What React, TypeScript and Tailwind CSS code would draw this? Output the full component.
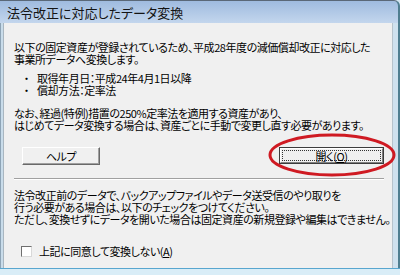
import React from "react";

export default function App() {
  return (
    <div className="relative w-[400px] h-[275px] overflow-hidden bg-[#d3e6f2] font-['Noto_Sans_CJK_JP',sans-serif] [font-feature-settings:'palt'] text-black flex flex-col">
      {/* title bar */}
      <div className="h-[23px] shrink-0 flex items-center pl-[7px] bg-gradient-to-b from-[#9fbbdf] to-[#c3d6ed] border-t border-t-[#5a6878] border-r-[2px] border-r-[#4f7e90] rounded-tr-[6px]">
        <span className="text-[13px] leading-[13px] text-[#141414] whitespace-nowrap">法令改正に対応したデータ変換</span>
      </div>
      {/* body */}
      <div className="flex flex-1 min-h-0">
        <div className="w-[3px] shrink-0 bg-[#c9dcea] border-l border-l-[#8ea4b6]" />
        <div className="flex-1 h-[245px] bg-[#f0f0f0] border-l border-l-[#a9b6c0] border-r border-r-[#b7c3cc] flex flex-col text-[11px] leading-[12px] tracking-[-0.45px] whitespace-nowrap">
          <div className="mt-[18px] pl-[10px]">
            <div>以下の固定資産が登録されているため、平成28年度の減価償却改正に対応した</div>
            <div>事業所データへ変換します。</div>
          </div>
          <div className="mt-[7px] pl-[17px]">
            <div className="flex">
              <span className="w-[16px] [font-feature-settings:normal]">・</span>
              <span>取得年月日：平成24年4月1日以降</span>
            </div>
            <div className="flex">
              <span className="w-[16px] [font-feature-settings:normal]">・</span>
              <span>償却方法：定率法</span>
            </div>
          </div>
          <div className="mt-[11px] pl-[10px]">
            <div>なお、経過(特例)措置の250%定率法を適用する資産があり、</div>
            <div>はじめてデータ変換する場合は、資産ごとに手動で変更し直す必要があります。</div>
          </div>
          <div className="mt-[16px] flex justify-between pl-[18px] pr-[8px]">
            <div className="w-[78px] h-[18px] flex items-center justify-center bg-[#f0f0f0] border border-t-white border-l-white border-b-[#696969] border-r-[#696969] shadow-[inset_-1px_-1px_0_#a0a0a0]">
              ヘルプ
            </div>
            <div className="w-[105px] h-[17px] border border-[#3c3c3c] flex">
              <div className="flex-1 border border-t-white border-l-white border-b-[#808080] border-r-[#808080] bg-[#f0f0f0] p-[1px] flex">
                <div className="flex-1 border border-dotted border-[#333] flex items-center justify-center">
                  開く(<span className="underline">O</span>)
                </div>
              </div>
            </div>
          </div>
          <div className="mt-[13px] ml-[10px] mr-[8px] h-[2px] border-t border-t-[#a0a0a0] border-b border-b-white" />
          <div className="mt-[9px] pl-[10px]">
            <div>法令改正前のデータで、バックアップファイルやデータ送受信のやり取りを</div>
            <div>行う必要がある場合は、以下のチェックをつけてください。</div>
            <div>ただし、変換せずにデータを開いた場合は固定資産の新規登録や編集はできません。</div>
          </div>
          <div className="mt-[20px] pl-[17px] flex items-center">
            <div className="w-[11px] h-[11px] bg-white border border-t-[#6f6f6f] border-l-[#6f6f6f] border-b-[#d8d8d8] border-r-[#d8d8d8]" />
            <span className="ml-[7px]">
              上記に同意して変換しない(<span className="underline">A</span>)
            </span>
          </div>
        </div>
        <div className="w-[7px] shrink-0 bg-[#cfe1ee] border-r-[2px] border-r-[#4f7e90]" />
      </div>
      <div className="h-[7px] shrink-0 border-t border-t-[#58a6cf] bg-[#d9edf7]" />
      {/* red annotation ellipse */}
      <svg className="absolute left-0 top-0 pointer-events-none" width="400" height="275">
        <ellipse cx="332" cy="155" rx="62" ry="20" fill="none" stroke="#cf1a22" strokeWidth="3" />
      </svg>
    </div>
  );
}
